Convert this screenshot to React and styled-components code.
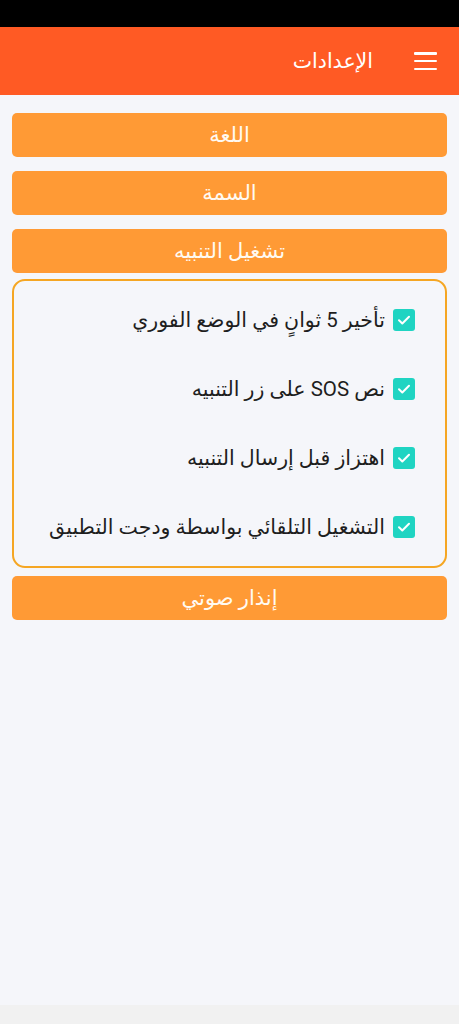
import React from "react";
import styled, { createGlobalStyle } from "styled-components";

const Global = createGlobalStyle`
  html, body { margin: 0; padding: 0; background: #f5f6fa; }
  body { font-family: Roboto, "DejaVu Sans", sans-serif; }
  * { box-sizing: border-box; }
`;

const Screen = styled.div`
  width: 459px;
  height: 1024px;
  display: flex;
  flex-direction: column;
  background: #f5f6fa;
`;

const StatusBar = styled.div`
  height: 27px;
  background: #000;
  flex: none;
`;

const Header = styled.header`
  height: 68px;
  flex: none;
  background: #ff5a24;
  display: flex;
  align-items: center;
  direction: rtl;
  padding: 0 22px;
  gap: 41px;
`;

const MenuButton = styled.button`
  border: 0;
  background: transparent;
  padding: 0;
  width: 23px;
  height: 18px;
  display: flex;
  flex-direction: column;
  justify-content: space-between;
  cursor: pointer;
  span {
    display: block;
    height: 2.5px;
    background: #fff;
    border-radius: 1px;
  }
`;

const Title = styled.h1`
  margin: 0;
  color: #fff;
  font-size: 20.5px;
  font-weight: 400;
`;

const Content = styled.main`
  flex: 1;
  padding: 18px 12px 0;
  display: flex;
  flex-direction: column;
  direction: rtl;
`;

const OrangeButton = styled.button`
  height: 44px;
  width: 100%;
  border: 0;
  border-radius: 5px;
  background: #ff9a35;
  color: #fffaf2;
  font-family: Roboto, "DejaVu Sans", sans-serif;
  font-size: 21px;
  margin-bottom: ${(p) => p.$mb ?? 14}px;
  display: flex;
  align-items: center;
  justify-content: center;
  cursor: pointer;
`;

const Panel = styled.section`
  border: 2px solid #f5a623;
  border-radius: 13px;
  padding: 17px 30px 17px 12px;
  margin-bottom: 8px;
  display: flex;
  flex-direction: column;
  gap: 25px;
`;

const Row = styled.label`
  height: 44px;
  display: flex;
  align-items: center;
  gap: 8px;
  color: #1e1e1e;
  font-size: 20.5px;
`;

const Box = styled.span`
  width: 22px;
  height: 22px;
  border-radius: 3px;
  background: #1fd4c2;
  display: flex;
  align-items: center;
  justify-content: center;
  flex: none;
`;

const NavBar = styled.div`
  height: 19px;
  flex: none;
  background: #f1f1f1;
`;

const Check = () => (
  <Box>
    <svg width="16" height="16" viewBox="0 0 16 16" fill="none">
      <path d="M3 8.3l3.3 3.2L13 4.8" stroke="#fff" strokeWidth="2" strokeLinecap="round" strokeLinejoin="round" />
    </svg>
  </Box>
);

const options = [
  "تأخير 5 ثوانٍ في الوضع الفوري",
  "نص SOS على زر التنبيه",
  "اهتزاز قبل إرسال التنبيه",
  "التشغيل التلقائي بواسطة ودجت التطبيق",
];

export default function App() {
  return (
    <Screen>
      <Global />
      <StatusBar />
      <Header>
        <MenuButton aria-label="menu">
          <span />
          <span />
          <span />
        </MenuButton>
        <Title>الإعدادات</Title>
      </Header>
      <Content>
        <OrangeButton>اللغة</OrangeButton>
        <OrangeButton>السمة</OrangeButton>
        <OrangeButton $mb={6}>تشغيل التنبيه</OrangeButton>
        <Panel>
          {options.map((o) => (
            <Row key={o}>
              <Check />
              <span>{o}</span>
            </Row>
          ))}
        </Panel>
        <OrangeButton>إنذار صوتي</OrangeButton>
      </Content>
      <NavBar />
    </Screen>
  );
}
